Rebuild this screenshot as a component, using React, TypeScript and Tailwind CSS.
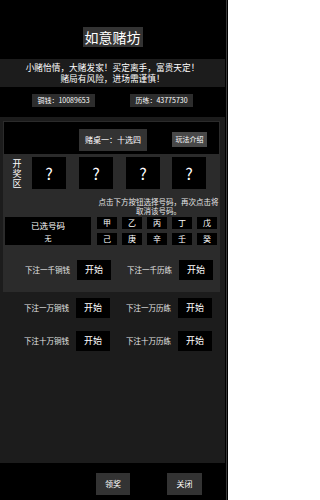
const font = { fontFamily: '"Noto Sans CJK SC", "Noto Sans", sans-serif' };

const stems = ["甲", "乙", "丙", "丁", "戊", "己", "庚", "辛", "壬", "癸"];

const bets = [
  ["下注一千铜钱", "下注一千历练"],
  ["下注一万铜钱", "下注一万历练"],
  ["下注十万铜钱", "下注十万历练"],
];

function BetRow({ left, right }: { left: string; right: string }) {
  return (
    <div className="flex h-[20px] items-center">
      <span className="ml-[21px] w-[46px] whitespace-nowrap text-[7.5px] leading-none text-[#e6e6e6]">{left}</span>
      <button className="ml-[6px] flex h-[20px] w-[34px] items-center justify-center bg-black text-[9px] text-white">开始</button>
      <span className="ml-[16px] w-[46px] whitespace-nowrap text-[7.5px] leading-none text-[#e6e6e6]">{right}</span>
      <button className="ml-[6px] flex h-[20px] w-[34px] items-center justify-center bg-black text-[9px] text-white">开始</button>
    </div>
  );
}

export default function App() {
  return (
    <div className="flex h-[500px] w-[228px] overflow-hidden bg-black text-white" style={font}>
      <div className="flex w-[225px] flex-col">
        {/* Title */}
        <div className="flex h-[117px] flex-col items-center">
          <div className="mt-[27px] flex h-[20px] w-[60px] items-center justify-center bg-[#333333] text-[14px] leading-none">
            如意赌坊
          </div>
          <div className="mt-[12px] flex h-[28px] w-full flex-col items-center justify-center bg-[#1c1c1c] text-[8.7px] leading-[11px]">
            <span className="whitespace-nowrap">小赌怡情，大赌发家！买定离手，富贵天定！</span>
            <span className="whitespace-nowrap">赌局有风险，进场需谨慎！</span>
          </div>
          <div className="mt-[7px] flex w-full">
            <div className="ml-[32px] flex h-[13px] w-[63px] items-center justify-center bg-[#2d2d2d] text-[7px] leading-none">
              铜钱：10089653
            </div>
            <div className="ml-[35px] flex h-[13px] w-[63px] items-center justify-center bg-[#2d2d2d] text-[7px] leading-none">
              历练：43775730
            </div>
          </div>
        </div>

        {/* Main panel */}
        <div className="flex h-[346px] flex-col bg-[#1c1c1c] pl-[3px] pr-[5px] pt-[4px]">
          <div className="flex h-[171px] flex-col bg-[#2b2b2b] p-[1px]">
            <div className="flex h-[32px] items-center bg-black pt-[3px]">
              <div className="ml-[75px] flex h-[22px] w-[68px] items-center justify-center bg-[#333333] text-[8px] leading-none">
                赌桌一：十选四
              </div>
              <div className="ml-[25px] flex h-[15px] w-[35px] items-center justify-center bg-[#484848] text-[7px] leading-none">
                玩法介绍
              </div>
            </div>
            <div className="mt-[3px] flex h-[32px]">
              <div className="ml-[8px] flex w-[10px] flex-col items-center pt-[2px] text-[9px] leading-[10px]">
                <span>开</span>
                <span>奖</span>
                <span>区</span>
              </div>
              <div className="ml-[10px] flex h-[32px] w-[34px] items-center justify-center bg-black text-[16px]">?</div>
              <div className="ml-[13px] flex h-[32px] w-[34px] items-center justify-center bg-black text-[16px]">?</div>
              <div className="ml-[13px] flex h-[32px] w-[34px] items-center justify-center bg-black text-[16px]">?</div>
              <div className="ml-[12px] flex h-[32px] w-[34px] items-center justify-center bg-black text-[16px]">?</div>
            </div>
            <div className="ml-[93px] mt-[8px] flex w-[123px] flex-col items-center text-[7.5px] leading-[9px] text-[#e6e6e6]">
              <span className="whitespace-nowrap">点击下方按钮选择号码，再次点击将</span>
              <span>取消该号码。</span>
            </div>
            <div className="mt-[2px] flex">
              <div className="ml-[1px] flex h-[28px] w-[86px] flex-col items-center bg-black pt-[2px]">
                <span className="text-[8.5px] leading-[12px]">已选号码</span>
                <span className="mt-[2px] text-[7px] leading-[10px]">无</span>
              </div>
              <div className="ml-[6px] grid grid-cols-5 gap-x-[5px] gap-y-[3px]">
                {stems.map((s) => (
                  <div key={s} className="flex h-[12px] w-[20px] items-center justify-center bg-black text-[8px] leading-none">
                    {s}
                  </div>
                ))}
              </div>
            </div>
            <div className="mt-[15px]">
              <BetRow left={bets[0][0]} right={bets[0][1]} />
            </div>
          </div>
          <div className="mt-[6px] flex flex-col gap-[13px]">
            <BetRow left={bets[1][0]} right={bets[1][1]} />
            <BetRow left={bets[2][0]} right={bets[2][1]} />
          </div>
        </div>

        {/* Bottom bar */}
        <div className="flex flex-1 items-start bg-black pt-[10px]">
          <button className="ml-[96px] flex h-[22px] w-[34px] items-center justify-center bg-[#333333] text-[8px] text-white">领奖</button>
          <button className="ml-[37px] flex h-[22px] w-[35px] items-center justify-center bg-[#333333] text-[8px] text-white">关闭</button>
        </div>
      </div>
      <div className="w-[1px]" />
      <div className="w-[1px] bg-[#3a3a3a]" />
    </div>
  );
}
